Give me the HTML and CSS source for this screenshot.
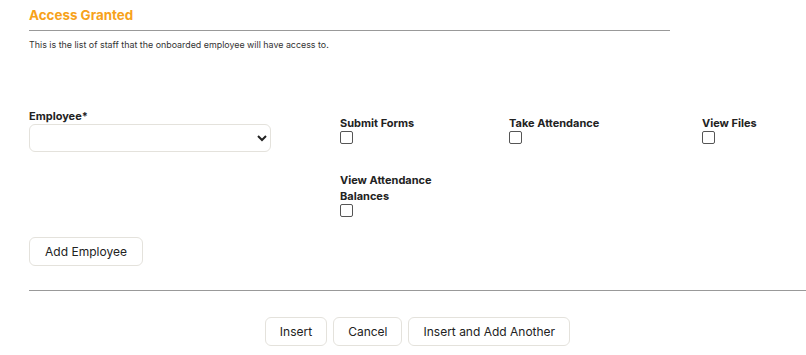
FILE: index.html
```html
<!DOCTYPE html>
<html lang="en">
<head>
  <meta charset="UTF-8">
  <meta name="viewport" content="width=device-width, initial-scale=1.0">
  <title>Access Granted</title>
  <link rel="stylesheet" href="styles.css">
</head>
<body>
  <main class="page">
    <section class="access">
      <h2 class="access__title">Access Granted</h2>
      <p class="access__desc">This is the list of staff that the onboarded employee will have access to.</p>
    </section>

    <div class="staff__row">
      <div class="field">
        <label class="field__label" for="employee">Employee*</label>
        <select id="employee" class="field__select">
          <option value=""></option>
        </select>
      </div>
      <div class="perm__grid">
        <label class="perm">
          <span class="perm__label">Submit Forms</span>
          <input type="checkbox" class="perm__check">
        </label>
        <label class="perm">
          <span class="perm__label">Take Attendance</span>
          <input type="checkbox" class="perm__check">
        </label>
        <label class="perm">
          <span class="perm__label">View Files</span>
          <input type="checkbox" class="perm__check">
        </label>
        <label class="perm perm--wrap">
          <span class="perm__label">View Attendance Balances</span>
          <input type="checkbox" class="perm__check">
        </label>
      </div>
    </div>

    <button type="button" class="btn btn--add">Add Employee</button>

    <hr class="divider">

    <div class="actions">
      <button type="button" class="btn">Insert</button>
      <button type="button" class="btn">Cancel</button>
      <button type="button" class="btn">Insert and Add Another</button>
    </div>
  </main>
</body>
</html>
```

FILE: styles.css
```css
* {
  margin: 0;
  padding: 0;
  box-sizing: border-box;
}

body {
  background: #fff;
  color: #222;
  font-family: Inter, "Noto Sans", sans-serif;
}

.page {
  padding: 7px 0 0 29px;
}

.access {
  width: 641px;
}

.access__title {
  padding-bottom: 6px;
  border-bottom: 1px solid #999;
  color: #f7a21b;
  font-size: 13.4px;
  font-weight: 700;
  line-height: 17px;
}

.access__desc {
  margin-top: 8px;
  color: #333;
  font-size: 8.9px;
  line-height: 11px;
}

.staff__row {
  display: flex;
  margin-top: 59px;
}

.field {
  width: 242px;
}

.field__label {
  display: block;
  font-size: 11px;
  font-weight: 700;
  line-height: 14px;
}

.field__select {
  display: block;
  width: 242px;
  height: 28px;
  margin-top: 1px;
  padding: 0 8px;
  border: 1px solid #e4e2dc;
  border-radius: 6px;
  background: #fff;
  color: #222;
  font: inherit;
}

.perm__grid {
  display: grid;
  grid-template-columns: 169px 193px 1fr;
  row-gap: 28px;
  margin: 6px 0 0 69px;
}

.perm {
  display: flex;
  flex-direction: column;
  align-items: flex-start;
}

.perm__label {
  font-size: 11px;
  font-weight: 700;
  line-height: 16px;
  color: #222;
}

.perm--wrap .perm__label {
  width: 100px;
}

.perm__check {
  width: 13px;
  height: 13px;
  margin: 0;
  appearance: none;
  border: 1px solid #555;
  border-radius: 2px;
  background: #fff;
}

.btn {
  height: 29px;
  padding: 0 14px;
  border: 1px solid #e4e2dc;
  border-radius: 6px;
  background: #fff;
  color: #222;
  font-family: inherit;
  font-size: 12px;
  cursor: pointer;
}

.btn--add {
  margin-top: 20px;
  width: 114px;
}

.divider {
  margin-top: 24px;
  border: none;
  border-top: 1px solid #999;
}

.actions {
  display: flex;
  justify-content: center;
  gap: 6px;
  margin-top: 26px;
}
```
